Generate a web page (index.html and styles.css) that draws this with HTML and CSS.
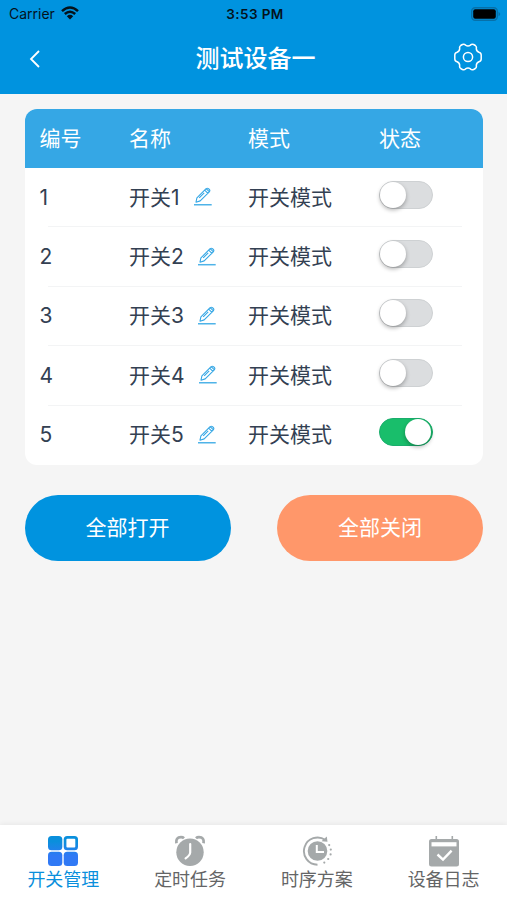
FILE: index.html
```
<!DOCTYPE html>
<html lang="zh-CN">
<head>
    <meta charset="UTF-8">
    <meta name="viewport" content="width=device-width, initial-scale=1.0">
    <title>测试设备一</title>
    <link rel="stylesheet" href="styles.css">
</head>
<body>
    <svg class="defs" width="0" height="0">
        <symbol id="icon-edit" viewBox="0 0 18 19">
            <path d="M2 15.2 2.9 10.9 12.1 1.7Q13.3.7 14.5 1.7L15.3 2.5Q16.4 3.6 15.3 4.8L6.2 13.9ZM10.7 3.1 13.9 6.3M12.2 1.7 15.4 4.8M5.2 10.9 10.2 5.9" fill="none" stroke="#35a7e5" stroke-width="1.1" stroke-linejoin="round"/>
            <path d="M0 17.7H17.7" stroke="#4fb3e8" stroke-width="1.5"/>
        </symbol>
    </svg>

    <header class="header">
        <div class="status-bar">
            <div class="carrier">
                <span>Carrier</span>
                <svg width="18" height="14" viewBox="0 0 18 14">
                    <path d="M1 5.1Q9-2.1 17 5.1M3.8 8Q9 3.4 14.2 8" fill="none" stroke="#04121c" stroke-width="2.5"/>
                    <path d="M5.8 10.2Q9 7.5 12.2 10.2L9 13.4Z" fill="#04121c"/>
                </svg>
            </div>
            <span class="time">3:53 PM</span>
            <svg class="battery" width="30" height="14" viewBox="0 0 30 14">
                <rect x=".7" y=".7" width="25.6" height="12.6" rx="3.5" fill="none" stroke="#0670a9" stroke-width="1.4"/>
                <rect x="2.2" y="2.2" width="22.6" height="9.6" rx="2" fill="#000"/>
                <path d="M27.5 4.7Q31 7 27.5 9.3Z" fill="#0670a9"/>
            </svg>
        </div>
        <div class="nav">
            <svg class="back" width="12" height="18" viewBox="0 0 12 18">
                <path d="M10 1 2 9 10 17" fill="none" stroke="#fff" stroke-width="1.8"/>
            </svg>
            <h1>测试设备一</h1>
            <svg class="settings" width="28" height="28" viewBox="0 0 28 28">
                <path d="M8.4 1.5Q10.3.7 11.5 2.1Q14 3.7 16.5 2.1Q17.7.7 19.6 1.5L21.3 2.5Q22.8 3.6 22.3 5.6Q22.3 8.2 24.9 9.3Q27.2 9.9 27.2 12V16Q27.2 18.1 24.9 18.7Q22.3 19.8 22.3 22.4Q22.8 24.4 21.3 25.5L19.6 26.5Q17.7 27.3 16.5 25.9Q14 24.3 11.5 25.9Q10.3 27.3 8.4 26.5L6.7 25.5Q5.2 24.4 5.7 22.4Q5.7 19.8 3.1 18.7Q.8 18.1.8 16V12Q.8 9.9 3.1 9.3Q5.7 8.2 5.7 5.6Q5.2 3.6 6.7 2.5Z" fill="none" stroke="#fff" stroke-width="1.5"/>
                <circle cx="14" cy="14" r="4.6" fill="none" stroke="#fff" stroke-width="1.5"/>
            </svg>
        </div>
    </header>

    <main class="content">
        <section class="card">
            <div class="row row-head">
                <span>编号</span><span>名称</span><span>模式</span><span>状态</span>
            </div>
            <div class="row">
                <span>1</span>
                <span class="name">开关1<svg class="edit"><use href="#icon-edit"/></svg></span>
                <span>开关模式</span>
                <button class="switch"></button>
            </div>
            <div class="row">
                <span>2</span>
                <span class="name">开关2<svg class="edit"><use href="#icon-edit"/></svg></span>
                <span>开关模式</span>
                <button class="switch"></button>
            </div>
            <div class="row">
                <span>3</span>
                <span class="name">开关3<svg class="edit"><use href="#icon-edit"/></svg></span>
                <span>开关模式</span>
                <button class="switch"></button>
            </div>
            <div class="row">
                <span>4</span>
                <span class="name">开关4<svg class="edit"><use href="#icon-edit"/></svg></span>
                <span>开关模式</span>
                <button class="switch"></button>
            </div>
            <div class="row">
                <span>5</span>
                <span class="name">开关5<svg class="edit"><use href="#icon-edit"/></svg></span>
                <span>开关模式</span>
                <button class="switch on"></button>
            </div>
        </section>

        <div class="actions">
            <button class="btn btn-open">全部打开</button>
            <button class="btn btn-close">全部关闭</button>
        </div>
    </main>

    <nav class="tabbar">
        <a class="tab active">
            <svg width="32" height="32" viewBox="0 0 32 32">
                <defs>
                    <linearGradient id="blue" x1="0" y1="0" x2="0" y2="32" gradientUnits="userSpaceOnUse">
                        <stop offset=".2" stop-color="#0a8fdc"/>
                        <stop offset=".65" stop-color="#3079f5"/>
                    </linearGradient>
                </defs>
                <g fill="url(#blue)">
                    <rect x="1" y="1" width="14.3" height="14.3" rx="3.5"/>
                    <rect x="16.7" y="1" width="14.3" height="14.3" rx="3.5"/>
                    <rect x="1" y="16.7" width="14.3" height="14.3" rx="3.5"/>
                    <rect x="16.7" y="16.7" width="14.3" height="14.3" rx="3.5"/>
                </g>
                <rect x="19.4" y="3.7" width="8.9" height="8.9" rx="1" fill="#fff"/>
            </svg>
            <span>开关管理</span>
        </a>
        <a class="tab">
            <svg width="32" height="32" viewBox="0 0 32 32">
                <circle cx="16" cy="17.2" r="13.7" fill="#a5a9aa"/>
                <path d="M2.4 8.2Q1.5 2.3 7 2.2Q8.9 2.2 10 3.2M29.6 8.2Q30.5 2.3 25 2.2Q23.1 2.2 22 3.2" fill="none" stroke="#a5a9aa" stroke-width="2.8"/>
                <path d="M16.2 9V17.5Q16 20.3 11.6 23.3" fill="none" stroke="#fff" stroke-width="2.2" stroke-linecap="round"/>
            </svg>
            <span>定时任务</span>
        </a>
        <a class="tab">
            <svg width="32" height="32" viewBox="0 0 32 32">
                <path d="M16.5 29.7A13.6 13.6 0 1 1 24.4 5" fill="none" stroke="#a5a9aa" stroke-width="1.9"/>
                <path d="M20.5 6.2 26.5 6.8 25.8 1.5Z" fill="#a5a9aa"/>
                <circle cx="16.5" cy="16" r="9.8" fill="#a5a9aa"/>
                <path d="M15.8 10V17H23" fill="none" stroke="#fff" stroke-width="2"/>
                <g fill="#a5a9aa">
                    <circle cx="28.2" cy="10.1" r="1.1"/>
                    <circle cx="29.8" cy="14.6" r="1.1"/>
                    <circle cx="29.6" cy="19.4" r="1.1"/>
                    <circle cx="27.2" cy="24" r="1.1"/>
                    <circle cx="23.3" cy="27.6" r="1.1"/>
                </g>
            </svg>
            <span>时序方案</span>
        </a>
        <a class="tab">
            <svg width="32" height="32" viewBox="0 0 32 32">
                <path d="M8.3 1V5M24.3 1V5" stroke="#a5a9aa" stroke-width="1.6"/>
                <rect x="1" y="4" width="30" height="27.5" rx="2.5" fill="#a5a9aa"/>
                <path d="M3.5 7.2H28.5V11.4H3.5Z" fill="#fff"/>
                <path d="M9.5 19.5 15 24.6 23.6 15.7" fill="none" stroke="#fff" stroke-width="2.4"/>
            </svg>
            <span>设备日志</span>
        </a>
    </nav>
</body>
</html>
```
FILE: styles.css
```
* {
    box-sizing: border-box;
}
body {
    font-family: Inter, "Noto Sans CJK SC", sans-serif;
    margin: 0;
    height: 100vh;
    display: flex;
    flex-direction: column;
    background-color: #f5f5f5;
    color: #334052;
    overflow: hidden;
}
svg {
    display: block;
    flex-shrink: 0;
}
.defs {
    position: absolute;
}
button {
    border: none;
    padding: 0;
    font-family: inherit;
    cursor: pointer;
}
.header {
    height: 94px;
    background-color: #0093df;
}
.status-bar {
    display: grid;
    grid-template-columns: 1fr auto 1fr;
    align-items: center;
    height: 27px;
    padding: 0 6px 0 9px;
    font-size: 14px;
    color: #04121c;
}
.carrier {
    display: flex;
    align-items: center;
    gap: 6px;
}
.carrier svg {
    margin-top: -2px;
}
.time {
    font-size: 13.5px;
    font-weight: 600;
    letter-spacing: 0.4px;
}
.battery {
    justify-self: end;
}
.nav {
    display: grid;
    grid-template-columns: 1fr auto 1fr;
    align-items: center;
    height: 64px;
    padding: 0 25px 0 29px;
}
.nav h1 {
    margin: 0;
    font-size: 24px;
    font-weight: 500;
    line-height: 34px;
    color: #fff;
}
.settings {
    justify-self: end;
    margin-top: -4px;
}
.content {
    flex: 1;
    padding: 15px 24px 0 24.5px;
}
.card {
    border-radius: 12px;
    background-color: #fff;
    overflow: hidden;
}
.row {
    display: grid;
    grid-template-columns: 89.5px 119px 131px 1fr;
    align-items: center;
    height: 59.4px;
    padding-left: 15px;
    font-size: 21px;
    line-height: 30px;
    background: linear-gradient(#f3f4f5, #f3f4f5) 23px 100% / 414px 1px no-repeat;
}
.row:last-child {
    background: none;
}
.row-head {
    height: 59px;
    background: #35a7e5;
    color: #fff;
}
.name {
    display: flex;
    align-items: center;
}
.edit {
    width: 18px;
    height: 19px;
    margin: -2px 0 0 14px;
}
.switch {
    width: 54px;
    height: 28px;
    margin-top: -6px;
    padding: 1px;
    border: 1px solid #ced1d3;
    border-radius: 14px;
    background-color: #dbdddf;
    display: flex;
    align-items: center;
}
.switch::before {
    content: "";
    width: 26px;
    height: 26px;
    margin-left: -1px;
    border-radius: 50%;
    background-color: #fff;
    box-shadow: 0 2px 4px rgba(0, 0, 0, 0.3);
}
.switch.on {
    justify-content: flex-end;
    border-color: #1aad6c;
    background-color: #19be6b;
}
.actions {
    display: flex;
    justify-content: space-between;
    margin-top: 30px;
}
.btn {
    width: 206px;
    height: 66px;
    border-radius: 33px;
    font-size: 21px;
    line-height: 30px;
    color: #fff;
}
.btn-open {
    background-color: #0093df;
}
.btn-close {
    background-color: #ff976a;
}
.tabbar {
    display: flex;
    height: 75px;
    background-color: #fff;
    box-shadow: 0 -1px 5px rgba(0, 0, 0, 0.06);
}
.tab {
    flex: 1;
    display: flex;
    flex-direction: column;
    align-items: center;
    padding-top: 10px;
    font-size: 18px;
    line-height: 26px;
    color: #646566;
}
.tab.active {
    color: #0a8fdc;
}
```
